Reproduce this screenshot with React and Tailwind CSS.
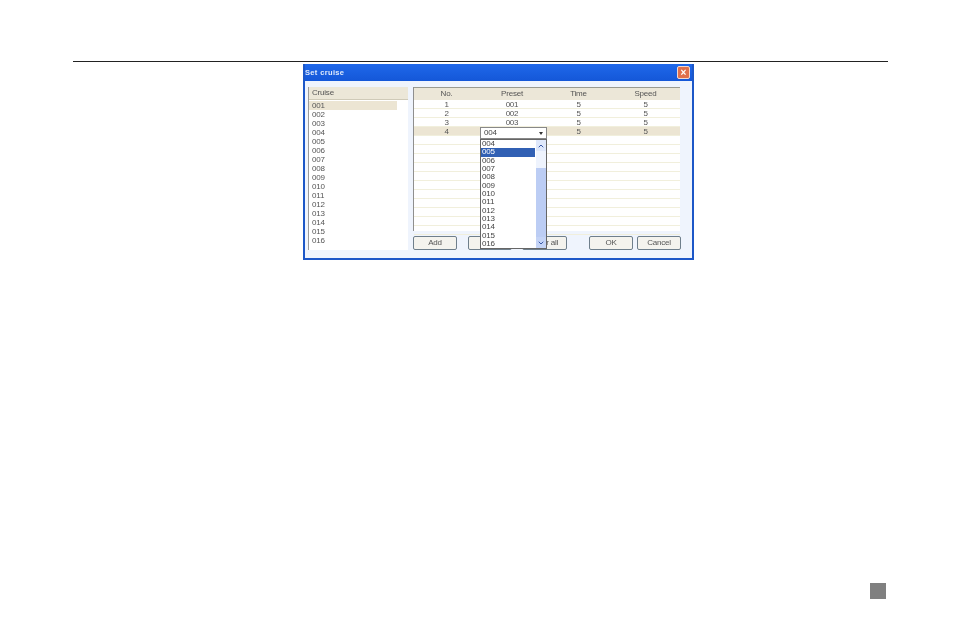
import { ChevronUp, ChevronDown } from 'lucide-react';

const CRUISES = ['001', '002', '003', '004', '005', '006', '007', '008', '009', '010', '011', '012', '013', '014', '015', '016'];
const PRESETS = ['004', '005', '006', '007', '008', '009', '010', '011', '012', '013', '014', '015', '016'];
const ROWS = [
  ['1', '001', '5', '5'],
  ['2', '002', '5', '5'],
  ['3', '003', '5', '5'],
  ['4', '', '5', '5'],
  ...Array.from({ length: 11 }, () => ['', '', '', '']),
];

function DlgButton({ label, className = '' }) {
  return (
    <div className={`h-[14px] flex items-center justify-center rounded-[2px] border border-[#6f7f8c] bg-[#f4f3ee] text-[8px] tracking-[-0.2px] text-[#555] ${className}`}>
      {label}
    </div>
  );
}

function TableRow({ cells, active }) {
  return (
    <div className={`h-[9px] flex items-center text-[8px] tracking-[-0.2px] leading-[9px] text-[#555] border-b border-[#f1efdc] ${active ? 'bg-[#ece5d3]' : ''}`}>
      <div className="w-[65px] text-center">{cells[0]}</div>
      <div className="w-[66px] text-center">{cells[1]}</div>
      <div className="w-[67px] text-center">{cells[2]}</div>
      <div className="w-[67px] text-center">{cells[3]}</div>
    </div>
  );
}

function PresetDropdown() {
  return (
    <div className="absolute left-[175px] top-[46px] w-[67px]">
      <div className="h-[12px] flex items-center justify-between pl-[3px] pr-[3px] border border-[#888] bg-white text-[8px] tracking-[-0.2px] text-[#444]">
        <span>004</span>
        <span className="w-0 h-0 border-x-[2px] border-x-transparent border-t-[3px] border-t-[#333]" />
      </div>
      <div className="h-[110px] flex border border-[#666] bg-white">
        <div className="flex-1 flex flex-col">
          {PRESETS.map((p, i) => (
            <div
              key={p}
              className={`h-[8.35px] pl-px text-[8px] tracking-[-0.2px] leading-[8.35px] ${i === 1 ? 'bg-[#3160b4] text-white mr-px' : 'text-[#444]'}`}
            >
              {p}
            </div>
          ))}
        </div>
        <div className="w-[10px] flex flex-col bg-[#eef3fd]">
          <div className="h-[11px] flex items-center justify-center bg-[#dfe8fb]">
            <ChevronUp className="size-[8px] text-[#3a5aa8]" strokeWidth={3} />
          </div>
          <div className="h-[17px]" />
          <div className="flex-1 bg-[#bccdf4]" />
          <div className="h-[11px] flex items-center justify-center bg-[#c5d4f6]">
            <ChevronDown className="size-[8px] text-[#3a5aa8]" strokeWidth={3} />
          </div>
        </div>
      </div>
    </div>
  );
}

export default function App() {
  return (
    <div className="relative w-[954px] h-[637px] bg-white overflow-hidden font-['Liberation_Sans',sans-serif]">
      <div className="pt-[61px] pl-[73px]">
        <div className="w-[815px] h-px bg-[#222]" />
      </div>

      <div className="ml-[303px] mt-[2px] w-[391px] h-[196px] flex flex-col bg-[#1c57c8] p-[2px] pt-0 blur-[0.35px]">
        <div className="h-[17px] shrink-0 flex items-center justify-between pr-[2px] bg-gradient-to-b from-[#1f68ea] to-[#1457d8]">
          <span className="text-[7.5px] font-bold tracking-[0.35px] text-[#dfe9fb]">Set cruise</span>
          <div className="size-[13px] flex items-center justify-center rounded-[2px] border border-[#f0d8d0] bg-[#e0704c] text-[10px] font-bold leading-none text-white">
            ×
          </div>
        </div>

        <div className="relative flex-1 flex gap-[5px] bg-[#eff4fd] pl-[3px] pt-[6px]">
          <div className="w-[100px] h-[163px] flex flex-col border-l border-[#9a9a9a] bg-white">
            <div className="h-[13px] flex items-center pl-[3px] bg-[#ece7d8] border-b border-[#cfcab8] text-[8px] tracking-[-0.2px] text-[#555]">
              Cruise
            </div>
            <div className="pt-px">
              {CRUISES.map((c, i) => (
                <div key={c} className={`h-[9px] w-[88px] pl-[3px] text-[8px] tracking-[-0.2px] leading-[9px] text-[#555] ${i === 0 ? 'bg-[#ece5d3]' : ''}`}>
                  {c}
                </div>
              ))}
            </div>
          </div>

          <div className="flex flex-col">
            <div className="w-[267px] h-[144px] border-l border-[#8f8f8f] bg-white">
              <div className="h-[13px] flex items-center border-t border-[#9a9a90] bg-[#ece7d8] text-[8px] tracking-[-0.2px] text-[#555]">
                <div className="w-[65px] text-center">No.</div>
                <div className="w-[66px] text-center">Preset</div>
                <div className="w-[67px] text-center">Time</div>
                <div className="w-[67px] text-center">Speed</div>
              </div>
              {ROWS.map((r, i) => (
                <TableRow key={i} cells={r} active={i === 3} />
              ))}
            </div>
            <div className="mt-[5px] flex">
              <DlgButton label="Add" className="w-[44px]" />
              {/* label sits fully behind the open dropdown */}
              <DlgButton label="" className="w-[44px] ml-[11px]" />
              <DlgButton label="Clear all" className="w-[45px] ml-[10px]" />
              <DlgButton label="OK" className="w-[44px] ml-[22px]" />
              <DlgButton label="Cancel" className="w-[44px] ml-[4px]" />
            </div>
          </div>

          <PresetDropdown />
        </div>
      </div>

      <div className="absolute left-[870px] top-[583px] size-[16px] bg-[#808080]" />
    </div>
  );
}
